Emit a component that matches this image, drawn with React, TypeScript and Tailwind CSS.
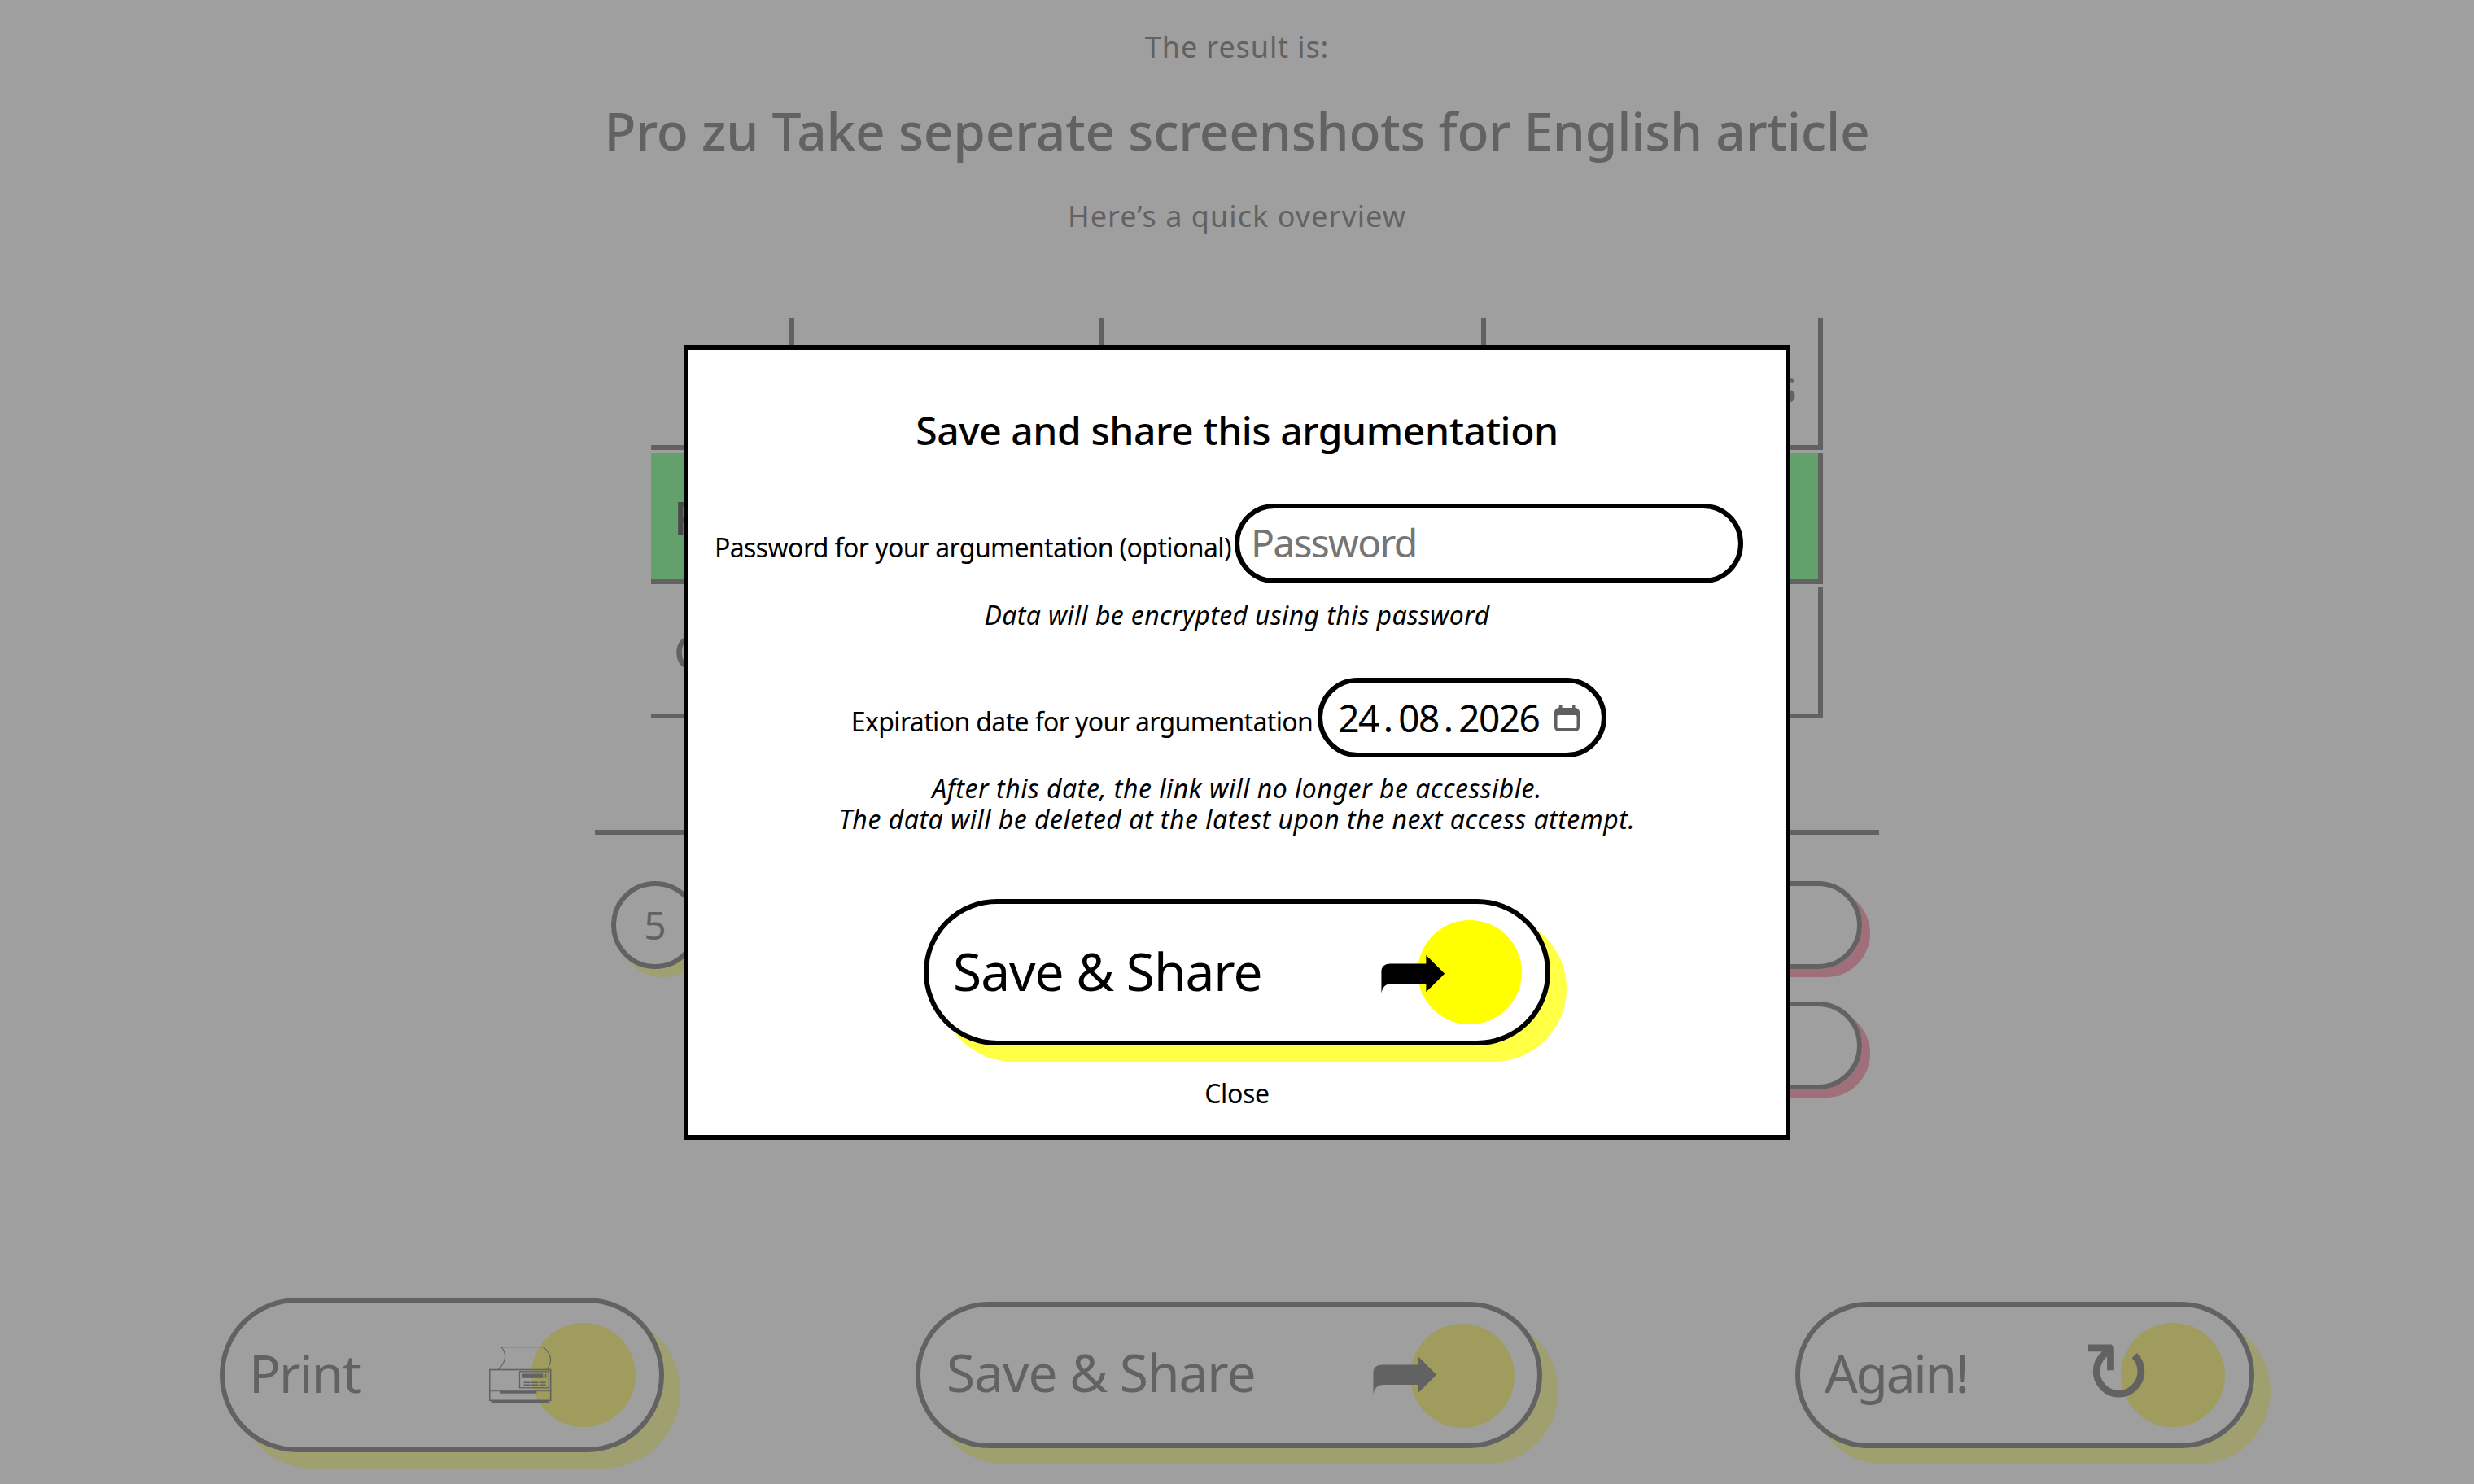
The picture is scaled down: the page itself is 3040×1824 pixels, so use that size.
const SANS = "font-['Noto_Sans',sans-serif]";

function ArrowGlyph({ color }: { color: string }) {
  return (
    <svg width="79" height="47" viewBox="112 103 236 142" className="shrink-0" aria-hidden="true">
      <path d="M112 245 C112 225 112 190 112 165 C112 145 125 135 145 135 L278 135 L278 103 L347 172 L278 240 L278 209 L150 209 C128 209 116 222 112 245 Z" fill={color} />
    </svg>
  );
}

function PrinterIcon() {
  return (
    <svg width="77" height="69" viewBox="120 95 232 208" className="shrink-0" aria-hidden="true" fill="none" stroke="#626262">
      <path d="M165 97 L320 97 C350 120 356 150 335 180 M165 97 C185 120 185 150 155 180" strokeWidth="3.5" />
      <rect x="122" y="181" width="226" height="114" strokeWidth="5" />
      <path d="M120 260 L350 260" strokeWidth="3" />
      <rect x="162" y="260" width="134" height="9" fill="#626262" stroke="none" />
      <rect x="128" y="296" width="214" height="7" fill="#626262" stroke="none" />
      <rect x="233" y="188" width="108" height="60" strokeWidth="4" />
      <rect x="242" y="196" width="78" height="16" fill="#626262" stroke="none" />
      <rect x="327" y="196" width="5" height="16" fill="#626262" stroke="none" />
      <g fill="#626262" stroke="none">
        <rect x="248" y="226" width="24" height="5" />
        <rect x="276" y="226" width="26" height="5" />
        <rect x="306" y="226" width="24" height="5" />
        <rect x="248" y="235" width="24" height="5" />
        <rect x="276" y="235" width="26" height="5" />
        <rect x="306" y="235" width="24" height="5" />
      </g>
    </svg>
  );
}

function CalendarIcon() {
  return (
    <svg width="31" height="33" viewBox="0 0 31 33" className="shrink-0" aria-hidden="true">
      <path d="M6 0 h3.5 v4 h12.5 v-4 h3.5 v4 a5.5 5.5 0 0 1 5.5 5.5 v18 a5.5 5.5 0 0 1 -5.5 5.5 h-20 a5.5 5.5 0 0 1 -5.5 -5.5 v-18 a5.5 5.5 0 0 1 5.5 -5.5 Z" fill="#5f5f5f" />
      <rect x="3.5" y="13" width="24" height="16" rx="1.5" fill="#fff" />
    </svg>
  );
}

const DATE = "24.08.2026".split("");

export default function App() {
  return (
    <div className={`relative w-[3040px] h-[1824px] overflow-hidden bg-[#9f9f9f] text-[#626262] ${SANS}`}>
      <div className="flex flex-col items-center">
        <p className="mt-[36px] text-[36px] leading-[44px] tracking-[0.9px]">The result is:</p>
        <h1 className="mt-[38px] text-[64px] leading-[86px] font-medium tracking-[-0.25px]">Pro zu Take seperate screenshots for English article</h1>
        <p className="mt-[40px] text-[36px] leading-[44px] tracking-[1.05px]">Here’s a quick overview</p>

        <div className="mt-[103px] w-[1440px] flex flex-col gap-[4px]">
          <div className="h-[162px] border-b-[6px] border-[#626262] grid grid-cols-[176px_380px_470px_414px]">
            <div className="border-r-[6px] border-[#626262]" />
            <div className="border-r-[6px] border-[#626262]" />
            <div className="border-r-[6px] border-[#626262]" />
            <div className="border-r-[6px] border-[#626262] flex justify-end items-start pt-[50px] pr-[26px] text-[56px] leading-[64px] font-medium">s</div>
          </div>
          <div className="h-[161px] bg-[#62a06c] border-b-[6px] border-r-[6px] border-[#626262] flex items-center pl-[28px] text-[56px] font-medium text-[#4a4a4a]">P</div>
          <div className="h-[161px] border-b-[6px] border-r-[6px] border-[#626262] flex items-center pl-[28px] text-[56px] font-medium">C</div>
        </div>

        <div className="mt-[137px] w-[1578px] h-[6px] bg-[#626262]" />

        <div className="mt-[57px] w-[1578px] pl-[20px] pr-[21px] flex flex-col gap-[40px]">
          <div className="flex gap-[20px]">
            <div className="w-[108px] h-[108px] shrink-0 rounded-full border-[6px] border-[#626262] shadow-[10px_10px_0_#9f9f70] flex items-center justify-center text-[48px]">5</div>
            <div className="flex-1 h-[108px] rounded-full border-[6px] border-[#626262] shadow-[10px_10px_0_#a0707a]" />
          </div>
          <div className="flex pl-[128px]">
            <div className="flex-1 h-[108px] rounded-full border-[6px] border-[#626262] shadow-[10px_10px_0_#a0707a]" />
          </div>
        </div>

        <div className="mt-[256px] w-full pl-[270px] flex items-center">
          <div className="relative w-[546px] h-[190px] rounded-full border-[6px] border-[#626262] shadow-[20px_20px_0_#9f9f70] flex items-center justify-between pl-[30px] pr-[132px]">
            <div className="absolute left-[377px] top-[25px] w-[128px] h-[128px] rounded-full bg-[#9f9c5e]" />
            <span className="relative -top-[2px] text-[64px] leading-[80px] tracking-[-1.6px]">Print</span>
            <span className="relative -top-[1px] flex"><PrinterIcon /></span>
          </div>
          <div className="relative ml-[309px] w-[770px] h-[180px] rounded-full border-[6px] border-[#626262] shadow-[20px_20px_0_#9f9f70] flex items-center justify-between pl-[32px] pr-[123px]">
            <div className="absolute left-[602px] top-[21px] w-[128px] h-[128px] rounded-full bg-[#9f9c5e]" />
            <span className="relative -top-[3px] text-[64px] leading-[80px] tracking-[-1px]">Save &amp; Share</span>
            <span className="relative flex"><ArrowGlyph color="#626262" /></span>
          </div>
          <div className="relative ml-[311px] w-[564px] h-[180px] rounded-full border-[6px] border-[#626262] shadow-[20px_20px_0_#9f9f70] flex items-center justify-between pl-[30px] pr-[118px]">
            <div className="absolute left-[394px] top-[20px] w-[128px] h-[128px] rounded-full bg-[#9f9c5e]" />
            <span className="relative -top-[2px] text-[64px] leading-[80px] tracking-[-2.3px]">Again!</span>
            <span className="relative -top-[2px] font-['DejaVu_Sans',sans-serif] text-[105px] leading-[96px]">↻</span>
          </div>
        </div>
      </div>

      <div className="absolute left-[840px] top-[424px] w-[1360px] h-[977px] bg-white border-[6px] border-black text-black flex flex-col items-center">
        <h2 className="mt-[70px] text-[48px] leading-[58px] font-medium tracking-[-0.42px]">Save and share this argumentation</h2>

        <div className="mt-[61px] w-full pl-[32px] flex items-center gap-[4px]">
          <label className="text-[32px] leading-[40px] pt-[10px] tracking-[-0.6px]">Password for your argumentation (optional)</label>
          <div className="w-[625px] h-[98px] rounded-full border-[6px] border-black flex items-center pl-[14px] pb-[2px] text-[48px] tracking-[-1.7px] text-[#757575]">Password</div>
        </div>

        <p className="mt-[20px] text-[32px] leading-[38px] italic tracking-[0.36px]">Data will be encrypted using this password</p>

        <div className="mt-[58px] w-full pr-[20px] flex items-center justify-center gap-[6px]">
          <label className="text-[32px] leading-[40px] pt-[10px] tracking-[-0.63px]">Expiration date for your argumentation</label>
          <div className="w-[355px] h-[98px] rounded-full border-[6px] border-black flex items-center pl-[19px] text-[46px]">
            {DATE.map((c, i) => (
              <span key={i} className="inline-block w-[24.7px] text-center">{c}</span>
            ))}
            <span className="ml-[19px] flex"><CalendarIcon /></span>
          </div>
        </div>

        <p className="mt-[19px] text-[32px] leading-[38px] italic text-center tracking-[0.5px]">
          After this date, the link will no longer be accessible.<br />
          The data will be deleted at the latest upon the next access attempt.
        </p>

        <div className="relative mt-[79px] w-[770px] h-[180px] shrink-0 rounded-full border-[6px] border-black shadow-[20px_20px_0_#ffff44] flex items-center justify-between pl-[30px] pr-[123px] bg-white">
          <div className="absolute left-[601px] top-[20px] w-[128px] h-[128px] rounded-full bg-[#ffff00]" />
          <span className="relative -top-[1px] text-[64px] leading-[80px] tracking-[-1px]">Save &amp; Share</span>
          <span className="relative top-[2px] flex"><ArrowGlyph color="#000" /></span>
        </div>

        <p className="mt-[40px] text-[32px] leading-[38px] tracking-[-0.3px]">Close</p>
      </div>
    </div>
  );
}
